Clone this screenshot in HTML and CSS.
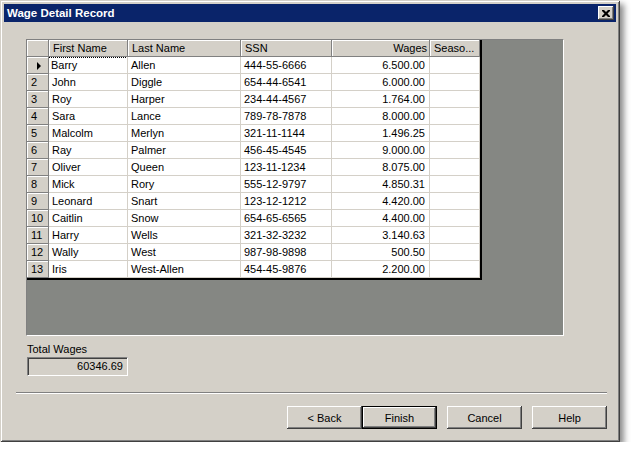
FILE: index.html
```html
<!DOCTYPE html>
<html lang="en">
<head>
    <meta charset="UTF-8">
    <title>Wage Detail Record</title>
    <link rel="stylesheet" href="styles.css">
</head>
<body>
<div class="window">
    <div class="titlebar">
        <span class="title">Wage Detail Record</span>
        <button class="close-btn" aria-label="Close">
            <svg width="8" height="7" viewBox="0 0 8 7"><path d="M0 0h2l2 2 2-2h2v1l-2.5 2.5L8 6v1H6L4 5 2 7H0V6l2.5-2.5L0 1z" fill="#000"/></svg>
        </button>
    </div>

    <div class="content">
        <div class="grid-panel">
            <table class="grid">
                <colgroup>
                    <col class="w-head">
                    <col class="w-first">
                    <col class="w-last">
                    <col class="w-ssn">
                    <col class="w-wages">
                    <col class="w-season">
                </colgroup>
                <thead>
                    <tr>
                        <th class="rowhead"></th>
                        <th>First Name</th>
                        <th>Last Name</th>
                        <th>SSN</th>
                        <th class="num">Wages</th>
                        <th>Seaso...</th>
                    </tr>
                </thead>
                <tbody id="rows"></tbody>
            </table>
        </div>

        <div class="total">
            <div class="total-label">Total Wages</div>
            <div class="total-box">60346.69</div>
        </div>

        <div class="separator"></div>

        <div class="buttons">
            <button class="btn">&lt; Back</button>
            <button class="btn default">Finish</button>
            <button class="btn gap">Cancel</button>
            <button class="btn gap">Help</button>
        </div>
    </div>
</div>

<script>
    const people = [
        ["Barry", "Allen", "444-55-6666", "6.500.00"],
        ["John", "Diggle", "654-44-6541", "6.000.00"],
        ["Roy", "Harper", "234-44-4567", "1.764.00"],
        ["Sara", "Lance", "789-78-7878", "8.000.00"],
        ["Malcolm", "Merlyn", "321-11-1144", "1.496.25"],
        ["Ray", "Palmer", "456-45-4545", "9.000.00"],
        ["Oliver", "Queen", "123-11-1234", "8.075.00"],
        ["Mick", "Rory", "555-12-9797", "4.850.31"],
        ["Leonard", "Snart", "123-12-1212", "4.420.00"],
        ["Caitlin", "Snow", "654-65-6565", "4.400.00"],
        ["Harry", "Wells", "321-32-3232", "3.140.63"],
        ["Wally", "West", "987-98-9898", "500.50"],
        ["Iris", "West-Allen", "454-45-9876", "2.200.00"]
    ];

    const tbody = document.getElementById("rows");
    people.forEach((p, i) => {
        const tr = document.createElement("tr");
        const head = i === 0 ? '<span class="arrow"></span>' : (i + 1);
        tr.innerHTML =
            `<td class="rowhead">${head}</td>` +
            `<td><span class="${i === 0 ? "focus" : ""}">${p[0]}</span></td>` +
            `<td>${p[1]}</td>` +
            `<td>${p[2]}</td>` +
            `<td class="num">${p[3]}</td>` +
            `<td></td>`;
        tbody.appendChild(tr);
    });
</script>
</body>
</html>
```

FILE: styles.css
```css
body {
    margin: 0;
    background: #ffffff;
    font-family: "Liberation Sans", Arial, sans-serif;
    font-size: 11px;
    color: #000;
}

.window {
    width: 620px;
    height: 442px;
    box-sizing: border-box;
    padding: 4px;
    background: #d4d0c8;
    box-shadow:
        inset 1px 1px #d4d0c8,
        inset -1px -1px #404040,
        inset 2px 2px #ffffff,
        inset -2px -2px #808080,
        4px 4px 6px rgba(0, 0, 0, 0.45);
}

.titlebar {
    height: 18px;
    background: #0a246a;
    display: flex;
    align-items: center;
    justify-content: space-between;
    padding: 0 2px 0 3px;
}

.title {
    color: #fff;
    font-weight: bold;
    font-size: 11.5px;
}

.close-btn {
    width: 16px;
    height: 14px;
    padding: 0;
    margin: 0;
    border: none;
    background: #d4d0c8;
    display: flex;
    align-items: center;
    justify-content: center;
    box-shadow:
        inset -1px -1px #404040,
        inset 1px 1px #ffffff,
        inset -2px -2px #808080;
}

.content {
    padding: 17px 0 0 22px;
}

.grid-panel {
    width: 538px;
    height: 297px;
    box-sizing: border-box;
    background: #858783;
    border-top: 1px solid #808080;
    border-left: 1px solid #808080;
    border-right: 1px solid #ffffff;
    border-bottom: 1px solid #ffffff;
}

.grid {
    width: 453px;
    border-collapse: separate;
    border-spacing: 0;
    table-layout: fixed;
    background: #fff;
    border-right: 2px solid #000;
    border-bottom: 2px solid #000;
}

.w-head { width: 22px; }
.w-first { width: 79px; }
.w-last { width: 113px; }
.w-ssn { width: 91px; }
.w-wages { width: 98px; }
.w-season { width: 50px; }

.grid th,
.grid td {
    height: 16px;
    padding: 0 3px;
    white-space: nowrap;
    overflow: hidden;
    text-align: left;
    font-weight: normal;
    line-height: 16px;
    border-right: 1px solid #d4d0c8;
    border-bottom: 1px solid #d4d0c8;
}

.grid th,
.grid td.rowhead {
    background: #d4d0c8;
    border-right-color: #808080;
    border-bottom-color: #808080;
    box-shadow: inset 1px 1px #ffffff;
    padding-left: 4px;
}

.grid .num {
    text-align: right;
    padding-right: 4px;
}

.grid th.num {
    padding-right: 2px;
}

.arrow {
    display: inline-block;
    margin-left: 6px;
    width: 0;
    height: 0;
    border-top: 4px solid transparent;
    border-bottom: 4px solid transparent;
    border-left: 4px solid #000;
    vertical-align: -1px;
}

.focus {
    display: inline-block;
    outline: 1px dotted #000;
    outline-offset: 0;
    width: 76px;
    margin-left: -3px;
    padding-left: 2px;
    line-height: 15px;
}

.total {
    margin-top: 6px;
}

.total-label {
    line-height: 14px;
    margin-left: 1px;
}

.total-box {
    width: 101px;
    height: 19px;
    margin: 1px 0 0 1px;
    box-sizing: border-box;
    padding-right: 4px;
    text-align: right;
    line-height: 16px;
    background: #d4d0c8;
    border-top: 1px solid #808080;
    border-left: 1px solid #808080;
    border-right: 1px solid #ffffff;
    border-bottom: 1px solid #ffffff;
    box-shadow: inset 1px 1px #404040;
}

.separator {
    margin: 16px 0 0 -10px;
    width: 591px;
    height: 1px;
    background: #808080;
    border-bottom: 1px solid #ffffff;
}

.buttons {
    display: flex;
    justify-content: flex-end;
    margin: 12px 9px 0 0;
}

.btn {
    width: 75px;
    height: 23px;
    padding: 0;
    font-family: "Liberation Sans", Arial, sans-serif;
    font-size: 11px;
    color: #000;
    background: #d4d0c8;
    border: none;
    box-shadow:
        inset -1px -1px #404040,
        inset 1px 1px #ffffff,
        inset -2px -2px #808080;
}

.btn.gap {
    margin-left: 10px;
}

.btn.default {
    box-shadow:
        inset 0 0 0 1px #000,
        inset -2px -2px #404040,
        inset 2px 2px #ffffff,
        inset -3px -3px #808080;
}
```
